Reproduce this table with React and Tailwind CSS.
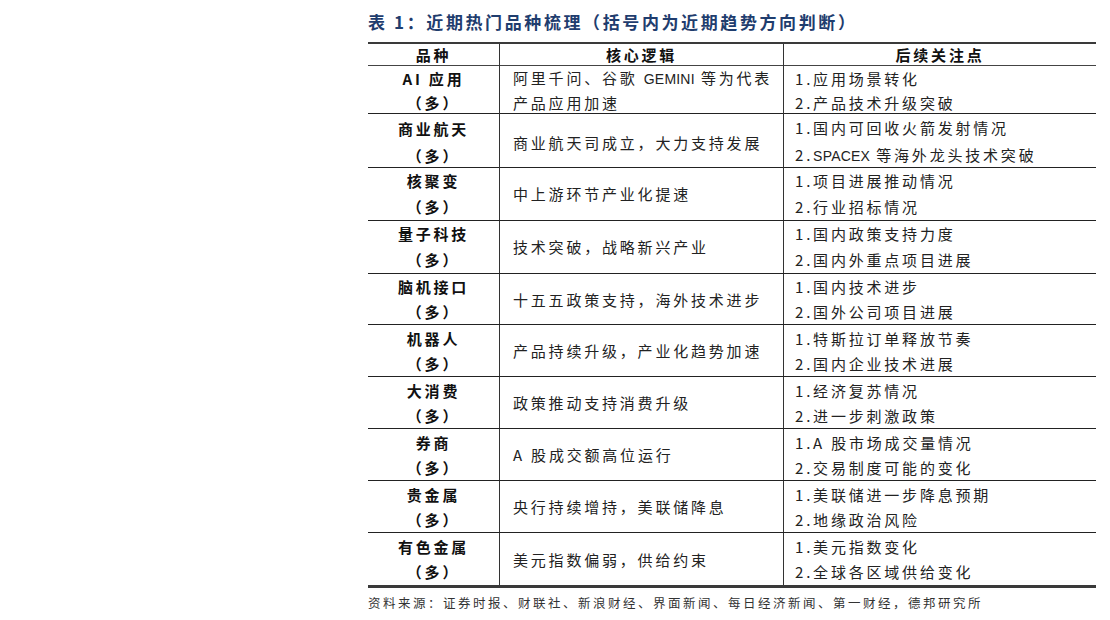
import React from "react";

const rows = [
  { name: "AI 应用", logic: ["阿里千问、谷歌 GEMINI 等为代表", "产品应用加速"], focus: ["1.应用场景转化", "2.产品技术升级突破"], h: "h-[48px]", lh: "leading-[24px]" },
  { name: "商业航天", logic: ["商业航天司成立，大力支持发展"], focus: ["1.国内可回收火箭发射情况", "2.SPACEX 等海外龙头技术突破"], h: "h-[54px]", lh: "leading-[27px]" },
  { name: "核聚变", logic: ["中上游环节产业化提速"], focus: ["1.项目进展推动情况", "2.行业招标情况"], h: "h-[53px]", lh: "leading-[26px]" },
  { name: "量子科技", logic: ["技术突破，战略新兴产业"], focus: ["1.国内政策支持力度", "2.国内外重点项目进展"], h: "h-[53px]", lh: "leading-[26px]" },
  { name: "脑机接口", logic: ["十五五政策支持，海外技术进步"], focus: ["1.国内技术进步", "2.国外公司项目进展"], h: "h-[51px]", lh: "leading-[25px]" },
  { name: "机器人", logic: ["产品持续升级，产业化趋势加速"], focus: ["1.特斯拉订单释放节奏", "2.国内企业技术进展"], h: "h-[52px]", lh: "leading-[25px]" },
  { name: "大消费", logic: ["政策推动支持消费升级"], focus: ["1.经济复苏情况", "2.进一步刺激政策"], h: "h-[52px]", lh: "leading-[25px]" },
  { name: "券商", logic: ["A 股成交额高位运行"], focus: ["1.A 股市场成交量情况", "2.交易制度可能的变化"], h: "h-[52px]", lh: "leading-[25px]" },
  { name: "贵金属", logic: ["央行持续增持，美联储降息"], focus: ["1.美联储进一步降息预期", "2.地缘政治风险"], h: "h-[52px]", lh: "leading-[25px]" },
  { name: "有色金属", logic: ["美元指数偏弱，供给约束"], focus: ["1.美元指数变化", "2.全球各区域供给变化"], h: "h-[52px]", lh: "leading-[25px]" },
];

const font = "font-['Liberation_Sans_Narrow','Noto_Sans_CJK_SC',sans-serif]";

// latin words in the source are set tight, so keep them out of the wide tracking
function Line({ text }) {
  const parts = text.split(/([A-Z]{2,})/);
  return (
    <span className="whitespace-nowrap">
      {parts.map((p, i) =>
        /^[A-Z]{2,}$/.test(p) ? (
          <span key={i} className="tracking-[0.2px] font-['Liberation_Sans'] text-[14px]">{p}</span>
        ) : (
          <span key={i}>{p}</span>
        )
      )}
    </span>
  );
}

export default function App() {
  return (
    <div className={`w-[1110px] h-[620px] bg-white text-[#111] ${font}`}>
      <div className="ml-[368px] w-[728px] pt-[10px]">
        {/* title */}
        <h1 className="text-[17px] leading-[24px] font-bold tracking-[2.6px] text-[#1f3d6e] mb-[8px]">
          表 1：近期热门品种梳理（括号内为近期趋势方向判断）
        </h1>

        <div className="border-t-2 border-b-[3px] border-[#3a3a3a]">
          {/* header */}
          <div className="grid grid-cols-[132px_284px_312px] h-[22px] border-b border-[#444] text-[15px] font-bold tracking-[2.8px]">
            <div className="border-r border-[#333] flex items-center justify-center">品种</div>
            <div className="border-r border-[#333] flex items-center justify-center">核心逻辑</div>
            <div className="flex items-center justify-center">后续关注点</div>
          </div>

          {rows.map((r, i) => (
            <div
              key={r.name}
              className={`grid grid-cols-[132px_284px_312px] ${r.h} ${i < rows.length - 1 ? "border-b border-[#222]" : ""} text-[15px] tracking-[2.8px]`}
            >
              <div className={`border-r border-[#333] flex flex-col items-center justify-center font-bold ${r.lh}`}>
                <span>{r.name}</span>
                <span>（多）</span>
              </div>
              <div className={`border-r border-[#333] flex flex-col justify-center pl-[13px] ${r.lh} text-[#222]`}>
                {r.logic.map((l) => (
                  <Line key={l} text={l} />
                ))}
              </div>
              <div className={`flex flex-col justify-center pl-[11px] ${r.lh} text-[#222]`}>
                {r.focus.map((f) => (
                  <Line key={f} text={f} />
                ))}
              </div>
            </div>
          ))}
        </div>

        {/* source */}
        <p className="mt-[5px] text-[12.5px] leading-[20px] tracking-[2.5px] text-[#333]">
          资料来源：证券时报、财联社、新浪财经、界面新闻、每日经济新闻、第一财经，德邦研究所
        </p>
      </div>
    </div>
  );
}
